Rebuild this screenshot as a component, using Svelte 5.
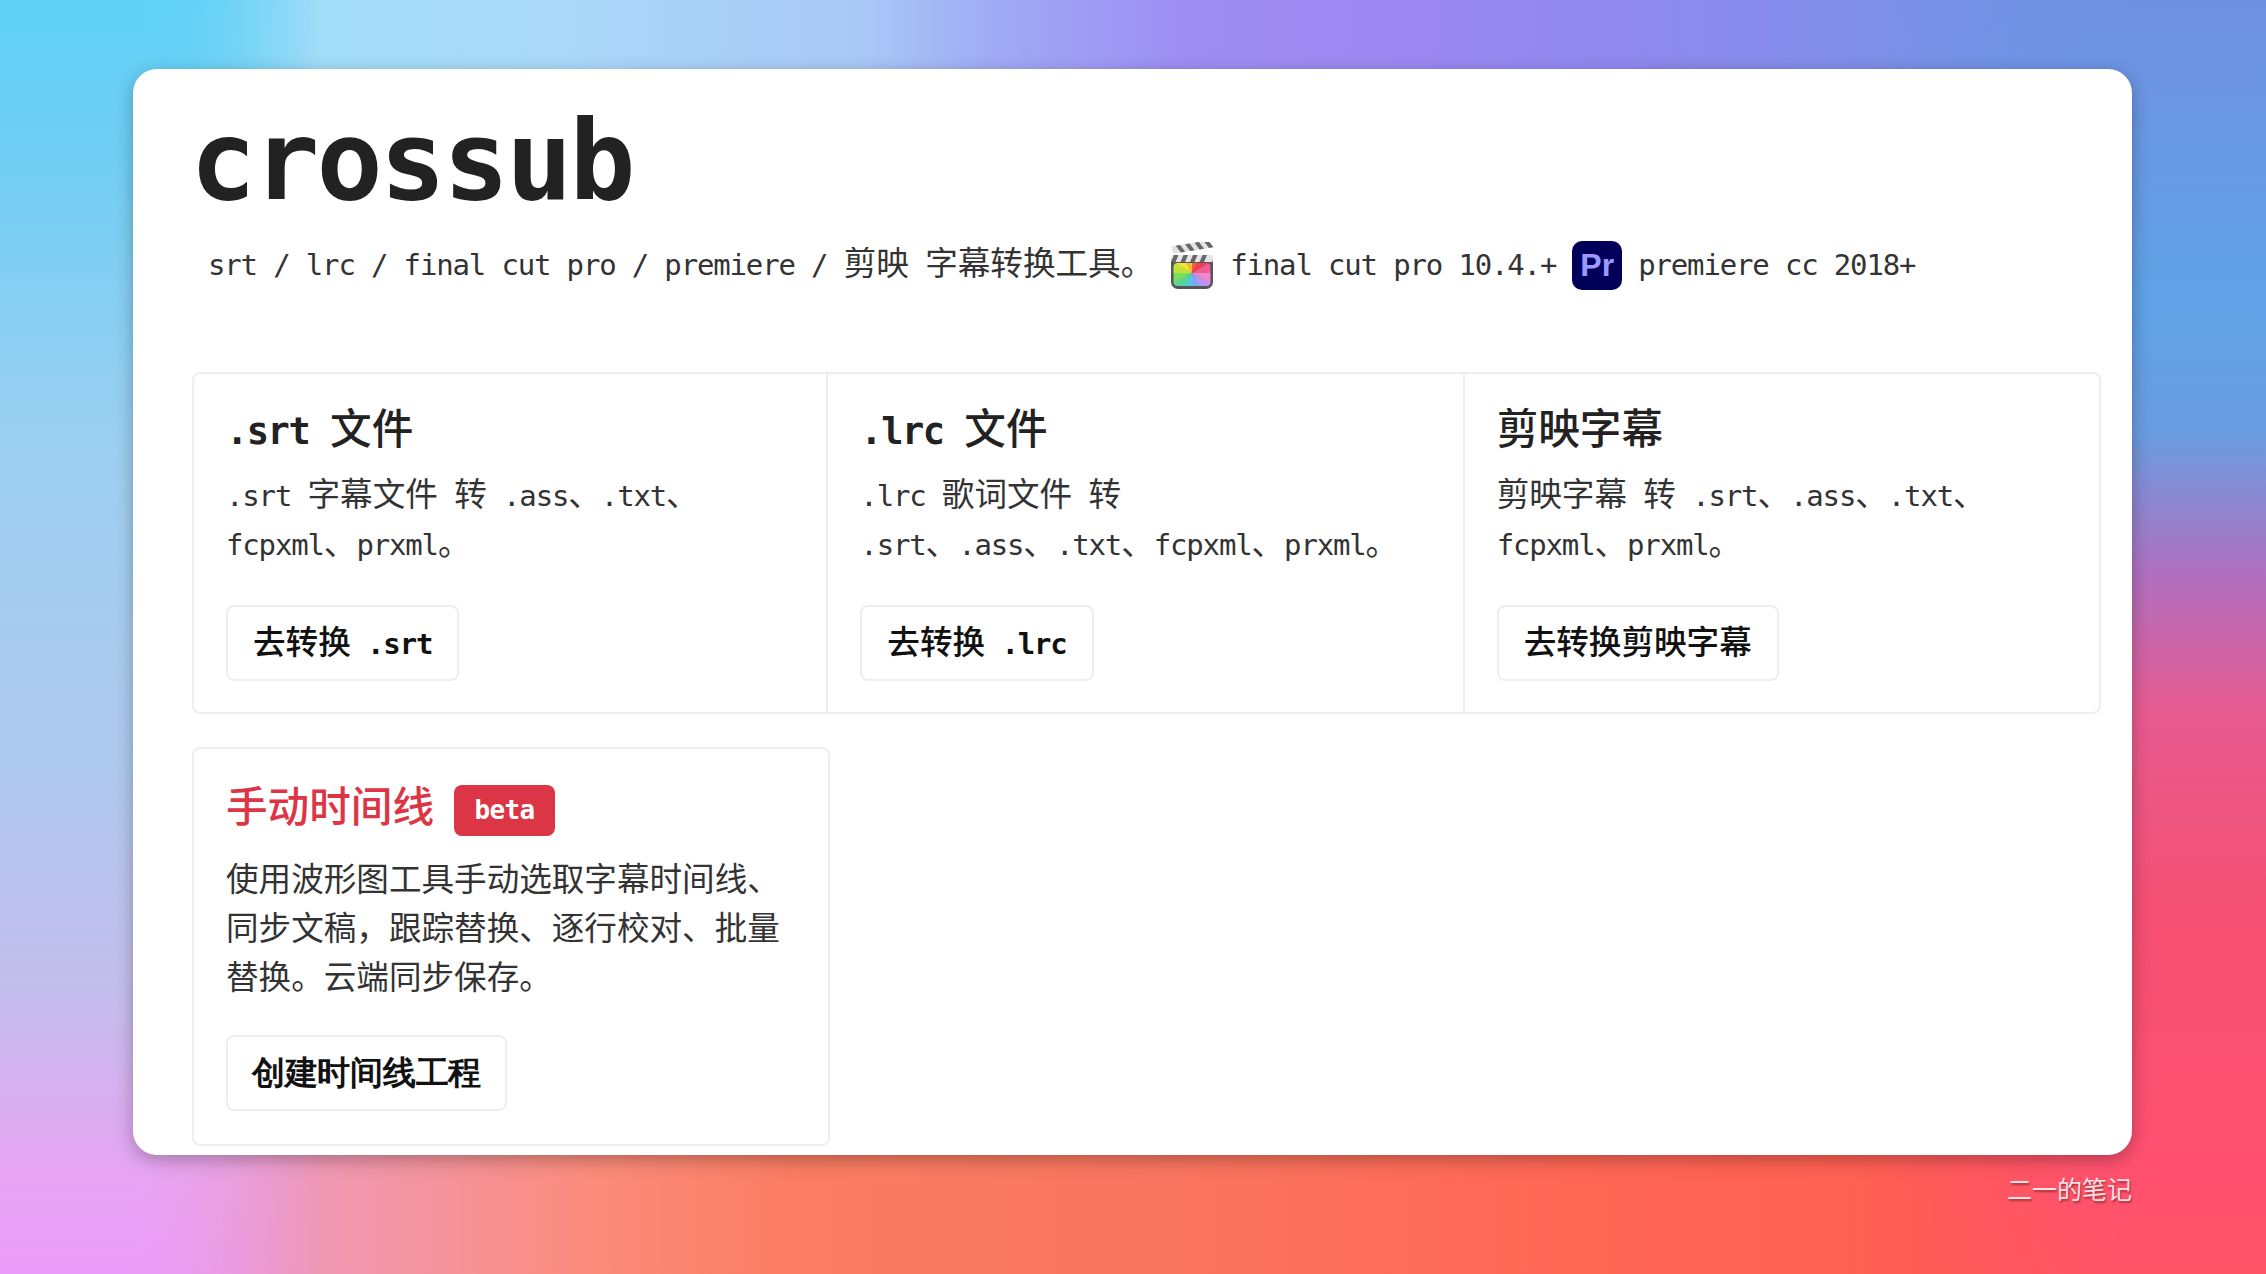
<script lang="ts">
  // Cards in the first row; "\n" marks the original's line breaks
  const converters = [
    {
      title: '.srt 文件',
      desc: '.srt 字幕文件 转 .ass、.txt、\nfcpxml、prxml。',
      action: '去转换 .srt',
    },
    {
      title: '.lrc 文件',
      desc: '.lrc 歌词文件 转\n.srt、.ass、.txt、fcpxml、prxml。',
      action: '去转换 .lrc',
    },
    {
      title: '剪映字幕',
      desc: '剪映字幕 转 .srt、.ass、.txt、\nfcpxml、prxml。',
      action: '去转换剪映字幕',
    },
  ];

  // Split a string in latin / CJK runs, they use different font sizes
  function runs(text: string) {
    return text
      .split(/([\u3000-\u303f\u4e00-\u9fff\uff00-\uffef]+)/)
      .map((value, i) => ({ value, cjk: i % 2 === 1 }))
      .filter((r) => r.value);
  }

  // Colour wheel of the Final Cut icon
  const wheelColours = [
    '#f4593c', '#f23c4c', '#f25c94', '#ee86d0', '#b894f4', '#78aaf4',
    '#58c4e0', '#54d49c', '#7cdc5c', '#c0e23c', '#f8e232', '#f8b83a',
  ];
  const cx = 22;
  const cy = 31;
  const wedges = wheelColours.map((fill, i) => {
    const a0 = ((i * 30 - 90) * Math.PI) / 180;
    const a1 = (((i + 1) * 30 - 90 + 1) * Math.PI) / 180;
    const r = 40;
    return {
      fill,
      points: `${cx},${cy} ${cx + r * Math.cos(a0)},${cy + r * Math.sin(a0)} ${cx + r * Math.cos(a1)},${cy + r * Math.sin(a1)}`,
    };
  });
  const stripes = [0, 1, 2, 3];
</script>

{#snippet mixed(text: string)}{#each runs(text) as r}<span class={r.cjk ? 'cjk' : 'lat'}>{r.value}</span>{/each}{/snippet}

<div class="page">
  <div class="left-edge"></div>

  <main class="window">
    <h1>crossub</h1>

    <div class="subtitle">
      <span class="line">{@render mixed('srt / lrc / final cut pro / premiere / 剪映 字幕转换工具。')}</span>
      <svg class="fcp" width="44" height="47" viewBox="0 0 44 47" aria-hidden="true">
        <defs>
          <clipPath id="screen"><rect x="3.5" y="21" width="37" height="23" rx="4" /></clipPath>
          <filter id="soft"><feGaussianBlur stdDeviation="0.7" /></filter>
        </defs>
        <!-- clapper arm -->
        <g transform="rotate(-9 4 12)">
          <rect x="3" y="4" width="38" height="7.5" rx="1.5" fill="#e2e2e2" />
          {#each stripes as s}
            <path d="M{7 + s * 9.5} 4h4.5l4 7.5h-4.5z" fill="#66676b" />
          {/each}
        </g>
        <!-- board -->
        <rect x="1" y="13" width="42" height="34" rx="7" fill="#55565a" />
        <rect x="1.5" y="13" width="41" height="7" fill="#e6e6e6" />
        {#each stripes as s}
          <path d="M{4 + s * 9.5} 13h4.5l-3 7h-4.5z" fill="#66676b" />
        {/each}
        <g clip-path="url(#screen)">
          <g filter="url(#soft)">
            {#each wedges as w}
              <polygon points={w.points} fill={w.fill} />
            {/each}
          </g>
        </g>
      </svg>
      <span class="line">{@render mixed('final cut pro 10.4.+')}</span>
      <span class="pr">Pr</span>
      <span class="line">{@render mixed('premiere cc 2018+')}</span>
    </div>

    <section class="group">
      {#each converters as card}
        <article class="card">
          <h3>{@render mixed(card.title)}</h3>
          <p>{@render mixed(card.desc)}</p>
          <button type="button">{@render mixed(card.action)}</button>
        </article>
      {/each}
    </section>

    <article class="card timeline">
      <h3 class="danger">
        <span>手动时间线</span>
        <span class="badge">beta</span>
      </h3>
      <p class="long">使用波形图工具手动选取字幕时间线、同步文稿，跟踪替换、逐行校对、批量替换。云端同步保存。</p>
      <button type="button">创建时间线工程</button>
    </article>
  </main>

  <footer>二一的笔记</footer>
</div>

<style>
  :global(body) {
    margin: 0;
  }

  .page {
    position: relative;
    box-sizing: border-box;
    width: 2266px;
    height: 1274px;
    padding: 69px 134px 0 133px;
    overflow: hidden;
    font-family: "DejaVu Sans Mono", monospace;
    color: #333;
    background: linear-gradient(
      to right,
      #ea9cf8 0,
      #e89fe4 6%,
      #f097b0 15%,
      #fb8c7c 26%,
      #fa7c62 35%,
      #f97660 50%,
      #ff6654 70%,
      #ff5f52 85%,
      #ff5a5c 100%
    );
  }

  /* top colours, fading down over the bottom ones */
  .page::before {
    content: "";
    position: absolute;
    inset: 0;
    background: linear-gradient(
      to right,
      #5fd0f6 0,
      #6bd4f7 8%,
      #a2dcf8 14%,
      #aad8f8 25%,
      #a9c8f6 38%,
      #a0aaf4 44%,
      #9e8ef3 52%,
      #9c88f2 62%,
      #8f88ee 72%,
      #7c90e8 85%,
      #6c98e2 100%
    );
    -webkit-mask-image: linear-gradient(to bottom, #000 30%, rgba(0, 0, 0, 0.62) 60%, transparent 90%);
    mask-image: linear-gradient(to bottom, #000 30%, rgba(0, 0, 0, 0.62) 60%, transparent 90%);
  }

  /* right edge runs blue to pink on its own */
  .page::after {
    content: "";
    position: absolute;
    inset: 0;
    background: linear-gradient(
      to bottom,
      #6f90e2 0,
      #60a2e5 24%,
      #6a9ce0 34%,
      #b070c0 45%,
      #e85a90 56%,
      #f54f72 72%,
      #ff5070 92%,
      #ff5468 100%
    );
    -webkit-mask-image: linear-gradient(to right, transparent 82%, #000 94%);
    mask-image: linear-gradient(to right, transparent 82%, #000 94%);
  }

  .left-edge {
    position: absolute;
    inset: 0;
    background: linear-gradient(
      to bottom,
      #5fd0f6 0,
      #70cef4 12%,
      #9ccff0 35%,
      #afc9ee 60%,
      #c4bdec 78%,
      #e6a4f2 92%,
      #ea9cf8 100%
    );
    -webkit-mask-image: linear-gradient(to right, #000 6%, transparent 14%);
    mask-image: linear-gradient(to right, #000 6%, transparent 14%);
  }

  .window {
    position: relative;
    z-index: 1;
    box-sizing: border-box;
    height: 1086px;
    padding: 0 31px 0 59px;
    background: #fff;
    border-radius: 24px;
    box-shadow: 0 5px 18px rgba(0, 0, 0, 0.28);
  }

  h1 {
    margin: 0 0 0 -2px;
    padding-top: 32px;
    font-size: 110px;
    line-height: 120px;
    letter-spacing: -3px;
    font-weight: 700;
    color: #222;
  }

  .subtitle {
    display: flex;
    align-items: center;
    height: 50px;
    margin-top: 18px;
    padding-left: 16px;
    font-size: 32.6px;
  }

  .line {
    white-space: pre;
  }

  .lat {
    font-family: "DejaVu Sans Mono", monospace;
    font-size: 0.89em;
    letter-spacing: -0.04em;
    line-height: 1;
  }

  .cjk {
    font-family: "Noto Sans CJK SC", sans-serif;
    line-height: 1;
  }

  .fcp {
    margin: 2px 16px 0 17px;
    flex: none;
  }

  .pr {
    flex: none;
    width: 50px;
    height: 49px;
    margin: 2px 16px 0 16px;
    border-radius: 10px;
    background: #00005b;
    color: #9999ff;
    font-family: "Liberation Sans", sans-serif;
    font-size: 32px;
    font-weight: 700;
    line-height: 49px;
    text-align: center;
  }

  .group {
    display: grid;
    grid-template-columns: repeat(3, 1fr);
    margin-top: 83px;
  }

  .card {
    box-sizing: border-box;
    padding: 31px 33px 31px 32px;
    border: 2px solid #eceef0;
    font-size: 32.6px;
  }

  .group .card + .card {
    margin-left: -2px;
  }

  .group .card:first-child {
    border-radius: 8px 0 0 8px;
  }

  .group .card:last-child {
    border-radius: 0 8px 8px 0;
  }

  h3 {
    margin: 0 0 17px;
    font-size: 41.6px;
    line-height: 49px;
    font-weight: 700;
    color: #222;
  }

  h3 :global(.cjk) {
    font-weight: 500;
  }

  p {
    margin: 0 0 36px;
    line-height: 49px;
    white-space: pre-line;
    color: #333;
  }

  button {
    display: block;
    box-sizing: border-box;
    height: 76px;
    padding: 0 25px;
    border: 2px solid #eceef0;
    border-radius: 8px;
    background: #fff;
    color: #111;
    font: inherit;
    font-weight: 700;
    line-height: 49px;
    white-space: pre;
  }

  button :global(.cjk) {
    font-weight: 500;
  }

  .timeline {
    width: 638px;
    margin-top: 33px;
    padding-bottom: 33px;
    border-radius: 8px;
  }

  .timeline button {
    padding: 0 24px;
    letter-spacing: -0.3px;
  }

  .danger {
    display: flex;
    align-items: flex-start;
    gap: 20px;
    margin-bottom: 16px;
    color: #dc3545;
    font-family: "Noto Sans CJK SC", sans-serif;
    font-weight: 500;
  }

  .badge {
    box-sizing: border-box;
    width: 101px;
    height: 51px;
    margin-top: 5px;
    border-radius: 8px;
    background: #dc3545;
    color: #fff;
    font-family: "DejaVu Sans Mono", monospace;
    font-size: 26px;
    font-weight: 700;
    letter-spacing: -0.6px;
    line-height: 51px;
    text-align: center;
  }

  .long {
    font-family: "Noto Sans CJK SC", sans-serif;
    white-space: normal;
  }

  footer {
    position: relative;
    z-index: 1;
    margin-top: 16px;
    font-family: "Noto Sans CJK SC", sans-serif;
    font-size: 25px;
    line-height: 34px;
    text-align: right;
    color: rgba(255, 255, 255, 0.85);
    text-shadow: 1px 2px 2px rgba(110, 20, 20, 0.55);
  }
</style>
